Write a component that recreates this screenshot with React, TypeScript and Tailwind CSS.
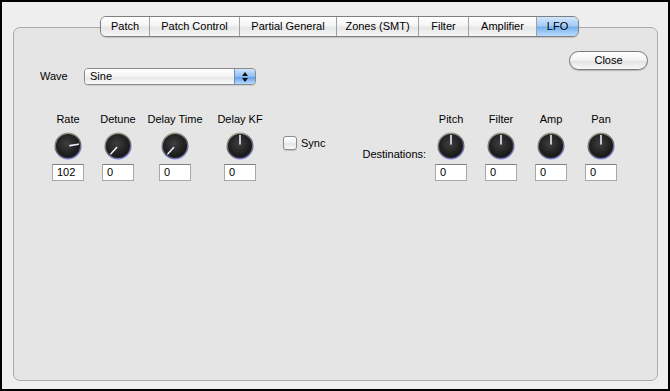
import React from "react";

const tabs = [
  { label: "Patch", w: "w-[48px]" },
  { label: "Patch Control", w: "w-[90px]" },
  { label: "Partial General", w: "w-[97px]" },
  { label: "Zones (SMT)", w: "w-[82px]" },
  { label: "Filter", w: "w-[50px]" },
  { label: "Amplifier", w: "w-[68px]" },
  { label: "LFO", w: "w-[42px]", active: true },
];

function Knob({ angle, id }: { angle: number; id: string }) {
  const rad = (angle * Math.PI) / 180;
  const x1 = 14 + Math.sin(rad) * 2;
  const y1 = 14 - Math.cos(rad) * 2;
  const x2 = 14 + Math.sin(rad) * 10.5;
  const y2 = 14 - Math.cos(rad) * 10.5;
  return (
    <svg width="28" height="28" viewBox="0 0 28 28">
      <defs>
        <radialGradient id={`body-${id}`} cx="45%" cy="40%" r="60%">
          <stop offset="0%" stopColor="#3e3e3e" />
          <stop offset="100%" stopColor="#181818" />
        </radialGradient>
        <linearGradient id={`rim-${id}`} x1="0.2" y1="0" x2="0.6" y2="1">
          <stop offset="0%" stopColor="#9a9a7a" />
          <stop offset="55%" stopColor="#4a4a5a" />
          <stop offset="100%" stopColor="#6a6ad0" />
        </linearGradient>
      </defs>
      <circle cx="14" cy="14" r="13.5" fill={`url(#rim-${id})`} opacity="0.85" />
      <circle cx="14" cy="14" r="12" fill="#202020" />
      <circle cx="14" cy="14" r="11" fill={`url(#body-${id})`} />
      <line x1={x1} y1={y1} x2={x2} y2={y2} stroke="#e6eefa" strokeWidth="1.6" strokeLinecap="round" />
    </svg>
  );
}

function ValueBox({ value }: { value: string }) {
  return (
    <div className="w-[32px] h-[17px] bg-white border border-[#a8a8a8] border-t-[#808080] pl-[4px] text-[11px] leading-[15px] text-black">
      {value}
    </div>
  );
}

function KnobColumn({ label, value, angle, id, w }: { label: string; value: string; angle: number; id: string; w: string }) {
  return (
    <div className={`${w} flex flex-col items-center`}>
      <div className="h-[13px] leading-[13px] text-[11px] text-black whitespace-nowrap">{label}</div>
      <div className="mt-[6px]">
        <Knob angle={angle} id={id} />
      </div>
      <div className="mt-[4px]">
        <ValueBox value={value} />
      </div>
    </div>
  );
}

export default function App() {
  return (
    <div
      className="w-[670px] h-[391px] border-2 border-black bg-[#eeeeee] flex flex-col pt-[14px] pl-[11px] pr-[10px] pb-[8px] overflow-hidden"
      style={{ fontFamily: '"Liberation Sans", Arial, sans-serif' }}
    >
      {/* tab strip */}
      <div className="relative z-10 ml-[87px] flex h-[21px] w-fit rounded-[6px] border border-[#7f7f7f] overflow-hidden shadow-[0_1px_1px_rgba(0,0,0,0.15)]">
        {tabs.map((t, i) => (
          <div
            key={t.label}
            className={`${t.w} flex items-center justify-center text-[11px] text-black ${
              i > 0 ? "border-l border-[#a0a0a0]" : ""
            } ${
              t.active
                ? "bg-[linear-gradient(#d2e7fc,#a6ccf5_45%,#78b2ee_55%,#b9dcfd)]"
                : "bg-[linear-gradient(#ffffff,#f4f4f4_45%,#e6e6e6_55%,#f6f6f6)]"
            }`}
          >
            {t.label}
          </div>
        ))}
      </div>

      {/* group box */}
      <div className="-mt-[10px] flex-1 rounded-[7px] border border-[#ababab] bg-[#e5e5e5] flex flex-col">
        <div className="flex justify-between items-start">
          <div className="mt-[40px] ml-[26px] flex items-center">
            <div className="w-[44px] text-[11px] text-black">Wave</div>
            <div className="w-[172px] h-[17px] rounded-[4px] border border-[#8a8a8a] flex overflow-hidden shadow-[0_1px_1px_rgba(0,0,0,0.1)]">
              <div className="flex-1 bg-[linear-gradient(#ffffff,#f3f3f3_50%,#e8e8e8_55%,#fafafa)] pl-[5px] text-[11px] leading-[15px] text-black">
                Sine
              </div>
              <div className="w-[21px] border-l border-[#6c8fc0] bg-[linear-gradient(#cfe5fc,#8fbff2_50%,#62a2ea_55%,#b7dafd)] flex flex-col items-center justify-center gap-[2px]">
                <svg width="6" height="4" viewBox="0 0 6 4">
                  <path d="M0 4 L3 0 L6 4 Z" fill="#111" />
                </svg>
                <svg width="6" height="4" viewBox="0 0 6 4">
                  <path d="M0 0 L3 4 L6 0 Z" fill="#111" />
                </svg>
              </div>
            </div>
          </div>
          <div className="mt-[23px] mr-[9px] w-[79px] h-[19px] rounded-full border border-[#7a7a7a] bg-[linear-gradient(#ffffff,#f2f2f2_50%,#e2e2e2_55%,#f8f8f8)] shadow-[0_1px_1px_rgba(0,0,0,0.2)] flex items-center justify-center text-[11px] text-black">
            Close
          </div>
        </div>

        {/* knob row */}
        <div className="mt-[28px] ml-[29px] flex items-start">
          <KnobColumn label="Rate" value="102" angle={80} id="rate" w="w-[50px]" />
          <KnobColumn label="Detune" value="0" angle={222} id="detune" w="w-[50px]" />
          <KnobColumn label="Delay Time" value="0" angle={222} id="dtime" w="w-[64px]" />
          <KnobColumn label="Delay KF" value="0" angle={0} id="dkf" w="w-[66px]" />

          <div className="ml-[10px] mt-[22px] flex items-center">
            <div className="w-[14px] h-[14px] rounded-[3px] border border-[#8a8a8a] bg-[linear-gradient(#ffffff,#f0f0f0_50%,#e4e4e4_55%,#fafafa)] shadow-[0_1px_1px_rgba(0,0,0,0.15)]" />
            <div className="ml-[4px] text-[11px] text-black">Sync</div>
          </div>

          <div className="ml-[37px] mt-[35px] h-[13px] leading-[13px] text-[11px] text-black">Destinations:</div>

          <div className="flex">
            <KnobColumn label="Pitch" value="0" angle={0} id="pitch" w="w-[50px]" />
            <KnobColumn label="Filter" value="0" angle={0} id="filter" w="w-[50px]" />
            <KnobColumn label="Amp" value="0" angle={0} id="amp" w="w-[50px]" />
            <KnobColumn label="Pan" value="0" angle={0} id="pan" w="w-[50px]" />
          </div>
        </div>
      </div>
    </div>
  );
}
